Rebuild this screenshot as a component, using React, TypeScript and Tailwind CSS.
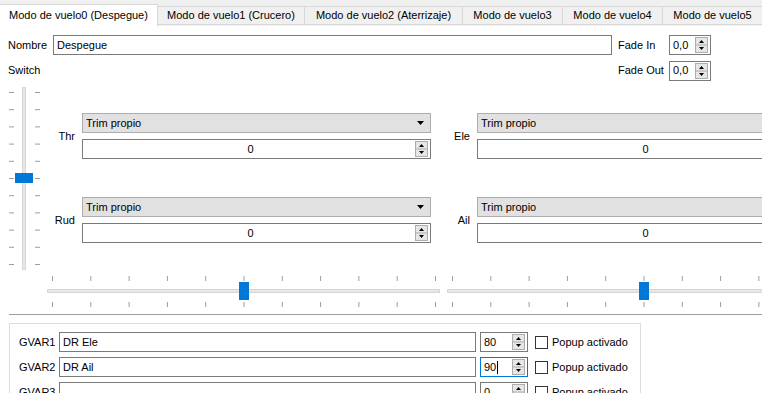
import React from 'react';

const tabs = [
  { label: 'Modo de vuelo0 (Despegue)', w: 'w-[158px]' },
  { label: 'Modo de vuelo1 (Crucero)', w: 'w-[147px]' },
  { label: 'Modo de vuelo2 (Aterrizaje)', w: 'w-[158px]' },
  { label: 'Modo de vuelo3', w: 'w-[100px]' },
  { label: 'Modo de vuelo4', w: 'w-[100px]' },
  { label: 'Modo de vuelo5', w: 'w-[100px]' },
];

function SpinButtons() {
  return (
    <svg width="13" height="16" viewBox="0 0 13 16" className="shrink-0">
      <rect x="0.5" y="0.5" width="12" height="15" fill="#e6e6e6" stroke="#adadad" />
      <line x1="1" y1="8" x2="12" y2="8" stroke="#adadad" />
      <path d="M4 6 L6.5 3 L9 6 Z" fill="#000" />
      <path d="M4 10 L9 10 L6.5 13 Z" fill="#000" />
    </svg>
  );
}

function Spin({
  value,
  className,
  center,
  focused,
}: {
  value: string;
  className: string;
  center?: boolean;
  focused?: boolean;
}) {
  return (
    <div
      className={`flex h-[20px] items-center border bg-white pr-[2px] ${
        focused ? 'border-[#0078d7]' : 'border-[#7a7a7a]'
      } ${className}`}
    >
      <div className={`flex flex-1 items-center pl-[3px] ${center ? 'justify-center' : ''}`}>
        <span>{value}</span>
        {focused && <span className="ml-px h-[13px] w-px bg-black" />}
      </div>
      <SpinButtons />
    </div>
  );
}

function Combo({ value }: { value: string }) {
  return (
    <div className="flex h-[20px] items-center border border-[#adadad] bg-[#e1e1e1] pl-[3px] pr-[6px]">
      <span className="flex-1">{value}</span>
      <svg width="7" height="4" viewBox="0 0 7 4">
        <path d="M0 0 L7 0 L3.5 4 Z" fill="#000" />
      </svg>
    </div>
  );
}

function TrimBlock({ label, labelW }: { label: string; labelW: string }) {
  return (
    <div className="flex items-center">
      <div className={`${labelW} pr-[7px] text-right`}>{label}</div>
      <div className="flex w-[349px] flex-col gap-[6px]">
        <Combo value="Trim propio" />
        <Spin value="0" className="w-full" center />
      </div>
    </div>
  );
}

function VSlider() {
  const ticks = Array.from({ length: 11 }, (_, i) => 7.5 + i * 17.2);
  return (
    <svg width="37" height="187" viewBox="0 0 37 187" className="shrink-0">
      <rect x="14.5" y="2.5" width="3" height="182" fill="#e7e7e7" stroke="#d6d6d6" />
      {ticks.map((y) => (
        <g key={y}>
          <line x1="1" y1={y} x2="6" y2={y} stroke="#9d9d9d" />
          <line x1="27" y1={y} x2="32" y2={y} stroke="#9d9d9d" />
        </g>
      ))}
      <rect x="7" y="88" width="18" height="10" fill="#0078d7" />
    </svg>
  );
}

function HSlider() {
  const ticks = Array.from({ length: 11 }, (_, i) => 10.5 + i * 38.3);
  return (
    <svg width="400" height="35" viewBox="0 0 400 35" className="shrink-0">
      <rect x="5.5" y="15.5" width="392" height="3" fill="#e7e7e7" stroke="#d6d6d6" />
      {ticks.map((x) => (
        <g key={x}>
          <line x1={x} y1="2" x2={x} y2="7" stroke="#9d9d9d" />
          <line x1={x} y1="28" x2={x} y2="33" stroke="#9d9d9d" />
        </g>
      ))}
      <rect x="197" y="8" width="10" height="18" fill="#0078d7" />
    </svg>
  );
}

function GvarRow({ n, name, value, focused }: { n: number; name: string; value: string; focused?: boolean }) {
  return (
    <div className="flex h-[20px] items-center">
      <div className="w-[40px]">GVAR{n}</div>
      <div className="flex h-[20px] w-[417px] items-center border border-[#7a7a7a] bg-white pl-[3px]">
        {name}
      </div>
      <Spin value={value} className="ml-[4px] w-[48px]" focused={focused} />
      <div className="ml-[7px] h-[13px] w-[13px] border border-[#333] bg-white" />
      <span className="ml-[4px]">Popup activado</span>
    </div>
  );
}

export default function App() {
  return (
    <div className="h-[393px] w-[762px] overflow-hidden bg-white font-['Liberation_Sans',Arial,sans-serif] text-[11px] text-black">
      {/* Tab bar */}
      <div className="flex h-[26px] items-end bg-[#f0f0f0]">
        {tabs.map((t, i) =>
          i === 0 ? (
            <div
              key={t.label}
              className={`${t.w} flex h-[22px] shrink-0 items-center justify-center border-r border-t border-[#d9d9d9] bg-white pb-[1px]`}
            >
              {t.label}
            </div>
          ) : (
            <div
              key={t.label}
              className={`${t.w} mb-px flex h-[19px] shrink-0 items-center justify-center border-b border-r border-t border-[#d9d9d9] bg-[#f0f0f0]`}
            >
              {t.label}
            </div>
          ),
        )}
      </div>

      <div className="w-[900px] pl-[8px]">
        {/* Nombre + Fade In */}
        <div className="mt-[9px] flex h-[20px] items-center">
          <div className="w-[45px]">Nombre</div>
          <div className="flex h-[20px] w-[559px] items-center border border-[#7a7a7a] pl-[3px]">Despegue</div>
          <div className="ml-[6px] w-[51px]">Fade In</div>
          <Spin value="0,0" className="w-[42px]" />
        </div>

        {/* Switch + Fade Out */}
        <div className="mt-[6px] flex h-[19px] items-center">
          <div className="w-[610px]">Switch</div>
          <div className="w-[51px]">Fade Out</div>
          <Spin value="0,0" className="w-[42px]" />
        </div>

        {/* Switch slider + trims */}
        <div className="mt-[5px] flex items-start">
          <VSlider />
          <div className="grid grid-cols-[386px_395px] content-start gap-y-[38px] pt-[28px]">
            <TrimBlock label="Thr" labelW="w-[37px]" />
            <TrimBlock label="Ele" labelW="w-[46px]" />
            <TrimBlock label="Rud" labelW="w-[37px]" />
            <TrimBlock label="Ail" labelW="w-[46px]" />
          </div>
        </div>

        {/* Trim sliders */}
        <div className="ml-[34px] mt-[2px] flex">
          <HSlider />
          <HSlider />
        </div>

        <div className="ml-px mt-[5px] h-px bg-[#a0a0a0]" />

        {/* GVARs */}
        <div className="ml-px mt-[8px] flex w-[632px] flex-col gap-[5px] border-l border-r border-t border-[#dcdcdc] pb-2 pl-[9px] pt-[8px]">
          <GvarRow n={1} name="DR Ele" value="80" />
          <GvarRow n={2} name="DR Ail" value="90" focused />
          <GvarRow n={3} name="" value="0" />
        </div>
      </div>
    </div>
  );
}
